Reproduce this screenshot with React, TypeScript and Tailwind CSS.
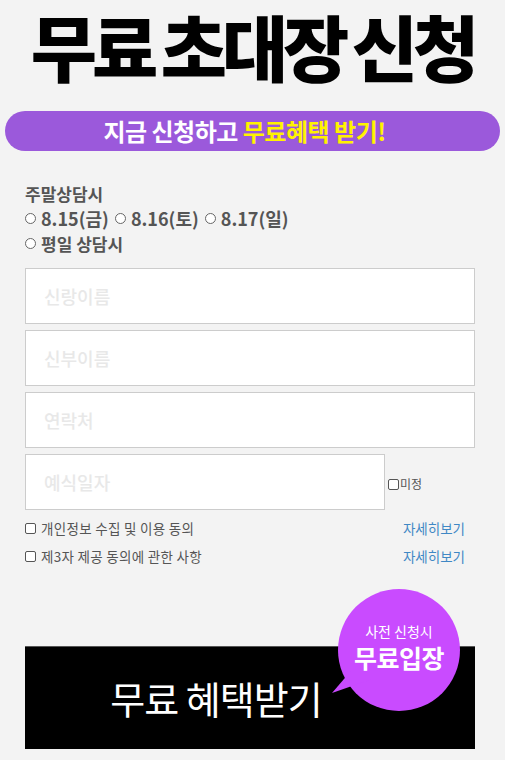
const font = { fontFamily: '"Noto Sans CJK KR", "Noto Sans", sans-serif' };

const Radio = ({ label }: { label: string }) => (
  <label className="flex items-center gap-[5px] mr-[6px]">
    <span className="w-[11px] h-[11px] rounded-full border border-[#666] bg-white inline-block" />
    <span>{label}</span>
  </label>
);

const Field = ({ placeholder, className = '' }: { placeholder: string; className?: string }) => (
  <div className={`h-[56px] bg-white border border-[#cccccc] flex items-center pl-[18px] ${className}`}>
    <span className="text-[18px] text-[#e8e8e8] font-medium">{placeholder}</span>
  </div>
);

const Agree = ({ label }: { label: string }) => (
  <div className="flex items-center justify-between pr-[10px]">
    <label className="flex items-center gap-[5px] text-[13.5px] text-[#555] tracking-[0.3px]">
      <span className="w-[11px] h-[11px] rounded-[2px] border border-[#555] bg-white inline-block" />
      {label}
    </label>
    <a href="#" className="text-[13.5px] text-[#3f88c5]">자세히보기</a>
  </div>
);

export default function App() {
  return (
    <div className="w-[505px] min-h-[760px] bg-[#f3f3f3] overflow-hidden" style={font}>
      <h1 className="pt-[2px] text-center text-[72px] leading-[86px] font-black text-black tracking-[-5px] [word-spacing:-4px] whitespace-nowrap">
        무료 초대장 신청
      </h1>

      <div className="mx-[5px] mt-[23px] h-[40px] rounded-full bg-[#9b59db] flex items-center justify-center pr-[16px] text-[24px] font-bold text-white tracking-[-0.5px]">
        지금 신청하고&nbsp;<span className="text-[#fff200]">무료혜택 받기!</span>
      </div>

      <div className="pl-[25px] pr-[30px] pt-[30px]">
        <div className="text-[17px] font-bold text-[#555] leading-[25px]">
          <div>주말상담시</div>
          <div className="flex items-center text-[18px]">
            <Radio label="8.15(금)" />
            <Radio label="8.16(토)" />
            <Radio label="8.17(일)" />
          </div>
          <div className="flex items-center">
            <Radio label="평일 상담시" />
          </div>
        </div>

        <div className="mt-[12px] flex flex-col gap-[6px]">
          <Field placeholder="신랑이름" />
          <Field placeholder="신부이름" />
          <Field placeholder="연락처" />
          <div className="flex items-center">
            <Field placeholder="예식일자" className="w-[360px]" />
            <label className="flex items-center gap-[1px] ml-[3px] mt-[4px] text-[12px] text-[#555]">
              <span className="w-[11px] h-[11px] rounded-[2px] border border-[#555] bg-white inline-block" />
              미정
            </label>
          </div>
        </div>

        <div className="mt-[8px] flex flex-col gap-[8px]">
          <Agree label="개인정보 수집 및 이용 동의" />
          <Agree label="제3자 제공 동의에 관한 사항" />
        </div>

        <div className="relative mt-[79px]">
          <button className="w-full h-[103px] bg-black border-t border-[#555] flex items-center justify-center pr-[68px]">
            <span className="text-[38px] text-white tracking-[-1px]">무료 혜택받기</span>
          </button>
          <div className="absolute left-[307px] top-[-57px] w-[128px] h-[128px]">
            <svg className="absolute left-0 top-0" width="128" height="128" viewBox="0 0 128 128">
              <circle cx="67" cy="61" r="61" fill="#c94bff" />
              <path d="M40 90 L0 104 L24 76 Z" fill="#c94bff" />
            </svg>
            <div className="absolute left-[6px] top-[34px] w-[122px] flex flex-col items-center text-white">
              <span className="text-[14px] leading-[16px]">사전 신청시</span>
              <span className="mt-[4px] text-[25px] font-bold leading-[28px] tracking-[-0.5px]">무료입장</span>
            </div>
          </div>
        </div>
      </div>
    </div>
  );
}
